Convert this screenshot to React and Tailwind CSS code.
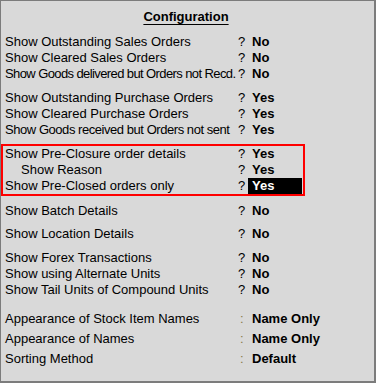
import React from "react";

const groupA = [
    ["Show Outstanding Sales Orders", "No"],
    ["Show Cleared Sales Orders", "No"],
    ["Show Goods delivered but Orders not Recd.", "No", "tracking-[-0.6px]"],
];

const groupB = [
    ["Show Outstanding Purchase Orders", "Yes"],
    ["Show Cleared Purchase Orders", "Yes"],
    ["Show Goods received but Orders not sent", "Yes", "tracking-[-0.45px]"],
];

const groupC = [
    ["Show Forex Transactions", "No"],
    ["Show using Alternate Units", "No"],
    ["Show Tail Units of Compound Units", "No"],
];

const appearance = [
    ["Appearance of Stock Item Names", "Name Only"],
    ["Appearance of Names", "Name Only"],
    ["Sorting Method", "Default"],
];

function Row({ label, value, indent, active, boxed, squeeze }) {
    let pad = boxed ? "w-[235px] pl-[2px]" : "w-[237px] pl-[4px]";
    if (indent) pad = "w-[235px] pl-[18px]";
    return (
        <div className="flex h-[16px] items-center leading-[16px]">
            <div className={"whitespace-nowrap " + pad + " " + (squeeze || "")}>{label}</div>
            <div className="w-[10px]">?</div>
            {active ? (
                <div className="w-[54px] bg-black pl-[4px] font-bold text-white">{value}</div>
            ) : (
                <div className="pl-[4px] font-bold">{value}</div>
            )}
        </div>
    );
}

function Choice({ label, value }) {
    return (
        <div className="flex h-[20px] items-center leading-[20px]">
            <div className="w-[239px] whitespace-nowrap pl-[4px]">{label}</div>
            <div className="w-[8px] text-[#8a7a4a]">:</div>
            <div className="pl-[4px] font-bold">{value}</div>
        </div>
    );
}

export default function App() {
    return (
        <div className="h-[383px] w-[376px] border-t border-l border-r-2 border-b-2 border-[#7c7c7c] bg-[#d9d9d9] pt-[8px] font-['Liberation_Sans',Arial,sans-serif] text-[13px] text-black">
            <div className="w-[370px] text-center leading-[16px]">
                <span className="font-bold underline underline-offset-[3px]">Configuration</span>
            </div>

            <div className="mt-[9px]">
                {groupA.map(([l, v, s]) => (
                    <Row key={l} label={l} value={v} squeeze={s} />
                ))}
            </div>

            <div className="mt-[8px]">
                {groupB.map(([l, v, s]) => (
                    <Row key={l} label={l} value={v} squeeze={s} />
                ))}
            </div>

            <div className="mt-[6px] w-[304px] border-2 border-[#ff0000]">
                <Row label="Show Pre-Closure order details" value="Yes" boxed />
                <Row label="Show Reason" value="Yes" indent boxed />
                <Row label="Show Pre-Closed orders only" value="Yes" active boxed />
            </div>

            <div className="mt-[7px]">
                <Row label="Show Batch Details" value="No" />
            </div>

            <div className="mt-[7px]">
                <Row label="Show Location Details" value="No" />
            </div>

            <div className="mt-[8px]">
                {groupC.map(([l, v]) => (
                    <Row key={l} label={l} value={v} />
                ))}
            </div>

            <div className="mt-[11px]">
                {appearance.map(([l, v]) => (
                    <Choice key={l} label={l} value={v} />
                ))}
            </div>
        </div>
    );
}
